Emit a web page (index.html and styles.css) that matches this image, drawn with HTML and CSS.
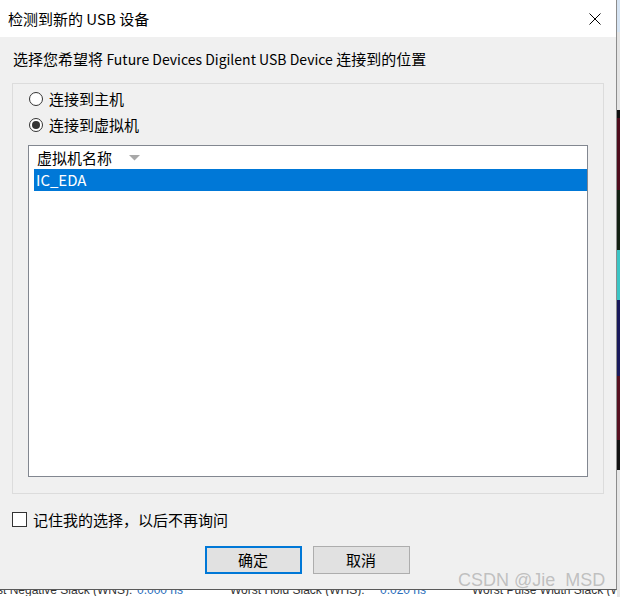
FILE: index.html
```html
<!DOCTYPE html>
<html lang="zh-CN">
<head>
<meta charset="utf-8">
<title>检测到新的 USB 设备</title>
<link rel="stylesheet" href="styles.css">
</head>
<body>
<div class="screen">
  <div class="window">
    <div class="titlebar">
      <span class="title">检测到新的 USB 设备</span>
      <svg class="close" width="12" height="12" viewBox="0 0 12 12"><path d="M0.5 0.5 L11.5 11.5 M11.5 0.5 L0.5 11.5" stroke="#000" stroke-width="1" fill="none"/></svg>
    </div>
    <div class="body">
      <p class="prompt">选择您希望将 <span class="latin">Future Devices Digilent USB Device</span> 连接到的位置</p>
      <div class="group">
        <div class="radio"><span class="circle"></span><span>连接到主机</span></div>
        <div class="radio checked"><span class="circle"></span><span>连接到虚拟机</span></div>
        <div class="listbox">
          <div class="lb-head">
            <span>虚拟机名称</span>
            <svg class="sort" width="11" height="6" viewBox="0 0 11 6"><path d="M0 0 H11 L5.5 5.5 Z" fill="#a8a8a8"/></svg>
          </div>
          <div class="lb-row selected">IC_EDA</div>
        </div>
      </div>
      <div class="check"><span class="box"></span><span>记住我的选择，以后不再询问</span></div>
      <div class="buttons">
        <button class="btn default">确定</button>
        <button class="btn">取消</button>
      </div>
    </div>
  </div>
  <div class="strip"></div>
  <div class="behind">
    <div class="behind-line">
      <span class="c1">st Negative Slack (WNS):</span><span class="c2 num">0.000 ns</span><span class="c3">Worst Hold Slack (WHS):</span><span class="c4 num">0.020 ns</span><span class="c5">Worst Pulse Width Slack (WP</span>
    </div>
  </div>
  <div class="watermark">CSDN @Jie_MSD</div>
</div>
</body>
</html>
```
FILE: styles.css
```css
html, body {
  margin: 0;
  padding: 0;
  background: #ffffff;
}
.screen {
  position: relative;
  width: 620px;
  height: 597px;
  overflow: hidden;
  display: grid;
  grid-template-columns: 617px 3px;
  grid-template-rows: 590px 7px;
  font-family: "Noto Sans CJK SC", "Noto Sans", sans-serif;
  color: #000;
}
.window {
  grid-column: 1;
  grid-row: 1;
  background: #f0f0f0;
  border-right: 1px solid #8c8c8c;
  border-bottom: 1px solid #5a5a5a;
  display: flex;
  flex-direction: column;
}
.titlebar {
  height: 37px;
  flex: none;
  background: #ffffff;
  display: flex;
  align-items: center;
  justify-content: space-between;
  padding: 0 15px 0 8px;
}
.title {
  font-size: 15px;
  line-height: 20px;
}
.close {
  display: block;
}
.body {
  display: flex;
  flex-direction: column;
}
.prompt {
  margin: 12px 0 0 13px;
  font-size: 15px;
  line-height: 20px;
}
.latin {
  font-size: 14px;
}
.group {
  box-sizing: border-box;
  margin: 14px 0 0 12px;
  width: 592px;
  height: 411px;
  border: 1px solid #dcdcdc;
  padding: 4px 0 0 15px;
  display: flex;
  flex-direction: column;
}
.radio {
  display: flex;
  align-items: center;
  height: 20px;
  font-size: 15px;
  padding-left: 1px;
}
.radio + .radio {
  margin-top: 6px;
}
.circle {
  box-sizing: border-box;
  width: 14px;
  height: 14px;
  border: 1px solid #333333;
  border-radius: 50%;
  background: #ffffff;
  margin-right: 6px;
  margin-top: 1px;
  display: flex;
  align-items: center;
  justify-content: center;
}
.checked .circle::after {
  content: "";
  width: 8px;
  height: 8px;
  border-radius: 50%;
  background: #333333;
}
.listbox {
  box-sizing: border-box;
  margin-top: 11px;
  width: 560px;
  height: 332px;
  border: 1px solid #828790;
  background: #ffffff;
}
.lb-head {
  height: 23px;
  display: flex;
  align-items: center;
  padding-left: 8px;
  font-size: 15px;
}
.sort {
  margin-left: 17px;
  margin-top: 1px;
}
.lb-row {
  margin-left: 5px;
  height: 22px;
  line-height: 22px;
  padding-left: 2px;
  font-size: 15px;
}
.selected {
  background: #0078d7;
  color: #ffffff;
}
.check {
  display: flex;
  align-items: center;
  height: 20px;
  margin: 15px 0 0 12px;
  font-size: 15px;
}
.box {
  box-sizing: border-box;
  width: 15px;
  height: 15px;
  border: 1px solid #333333;
  background: #ffffff;
  margin-right: 6px;
  margin-top: 1px;
}
.buttons {
  display: flex;
  justify-content: center;
  gap: 11px;
  margin-top: 17px;
  padding-right: 2px;
}
.btn {
  box-sizing: border-box;
  width: 97px;
  height: 28px;
  border: 1px solid #adadad;
  background: #e1e1e1;
  font-family: "Noto Sans CJK SC", sans-serif;
  font-size: 15px;
  color: #000;
  padding: 0 0 2px;
}
.btn.default {
  border: 2px solid #0078d7;
}
.strip {
  grid-column: 2;
  grid-row: 1 / 3;
  background: linear-gradient(to bottom,
    #d6e4f3 0, #d6e4f3 32px,
    #e4e4e4 32px, #e4e4e4 110px,
    #111111 110px, #111111 118px,
    #4e0c1c 118px, #4e0c1c 190px,
    #132013 190px, #132013 250px,
    #3cc4c4 250px, #3cc4c4 300px,
    #1a1a5c 300px, #1a1a5c 376px,
    #561020 376px, #561020 440px,
    #111111 440px, #111111 470px,
    #e6e6e6 470px, #e6e6e6 597px);
}
.behind {
  grid-column: 1;
  grid-row: 2;
  overflow: hidden;
  background: #ffffff;
}
.behind-line {
  margin-top: -6px;
  display: flex;
  white-space: nowrap;
  font-family: "Liberation Sans", sans-serif;
  font-size: 12px;
  line-height: 12px;
  color: #333333;
  margin-left: -3px;
}
.behind-line span {
  flex: none;
  display: block;
  overflow: hidden;
}
.c1 { width: 140px; }
.c2 { width: 93px; }
.c3 { width: 150px; }
.c4 { width: 92px; }
.num { color: #2a6ebb; }
.watermark {
  position: absolute;
  left: 458px;
  top: 569px;
  font-family: "Liberation Sans", sans-serif;
  font-size: 18px;
  line-height: 22px;
  color: rgba(150, 150, 150, 0.55);
  white-space: nowrap;
}
```
